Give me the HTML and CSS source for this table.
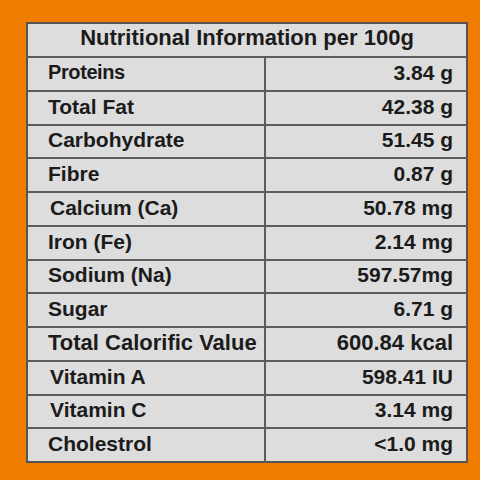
FILE: index.html
```html
<!DOCTYPE html>
<html lang="en">
<head>
    <meta charset="UTF-8">
    <title>Nutritional Information</title>
    <link rel="stylesheet" href="styles.css">
</head>
<body>
    <table class="nutrition">
        <colgroup>
            <col class="col-name">
            <col class="col-value">
        </colgroup>
        <thead>
            <tr>
                <th colspan="2">Nutritional Information per 100g</th>
            </tr>
        </thead>
        <tbody>
            <tr><td class="name narrow">Proteins</td><td class="value">3.84 g</td></tr>
            <tr><td class="name">Total Fat</td><td class="value">42.38 g</td></tr>
            <tr><td class="name">Carbohydrate</td><td class="value">51.45 g</td></tr>
            <tr><td class="name">Fibre</td><td class="value">0.87 g</td></tr>
            <tr><td class="name shift">Calcium (Ca)</td><td class="value">50.78 mg</td></tr>
            <tr><td class="name">Iron (Fe)</td><td class="value">2.14 mg</td></tr>
            <tr><td class="name">Sodium (Na)</td><td class="value">597.57mg</td></tr>
            <tr><td class="name">Sugar</td><td class="value">6.71 g</td></tr>
            <tr><td class="name wide">Total Calorific Value</td><td class="value wide">600.84 kcal</td></tr>
            <tr><td class="name shift">Vitamin A</td><td class="value">598.41 IU</td></tr>
            <tr><td class="name shift">Vitamin C</td><td class="value">3.14 mg</td></tr>
            <tr><td class="name">Cholestrol</td><td class="value">&lt;1.0 mg</td></tr>
        </tbody>
    </table>
</body>
</html>
```

FILE: styles.css
```css
body {
    margin: 0;
    padding: 22px 0 0 26px;
    background-color: #f07c00;
    font-family: 'Liberation Sans', Arial, sans-serif;
    color: #1b1b1b;
}

.nutrition {
    width: 440px;
    border-collapse: collapse;
    background-color: #dddddd;
    border: 2px solid #555555;
    table-layout: fixed;
}

.col-name {
    width: 238px;
}

.col-value {
    width: 202px;
}

.nutrition thead tr {
    height: 34px;
}

.nutrition tbody tr {
    height: 33.75px;
}

.nutrition th {
    padding: 0 0 4px;
    font-size: 22px;
    font-weight: bold;
    text-align: center;
    border-bottom: 2px solid #5c5c5c;
}

.nutrition td {
    padding: 0 0 2px;
    font-size: 21px;
    font-weight: bold;
    border-top: 2px solid #5c5c5c;
}

.nutrition td.name {
    padding-left: 20px;
    border-right: 2px solid #5c5c5c;
}

.nutrition td.name.shift {
    padding-left: 22px;
}

.nutrition td.narrow {
    font-size: 20px;
    letter-spacing: -0.4px;
}

.nutrition td.wide {
    font-size: 22px;
}

.nutrition td.value {
    text-align: right;
    padding-right: 13px;
}
```
